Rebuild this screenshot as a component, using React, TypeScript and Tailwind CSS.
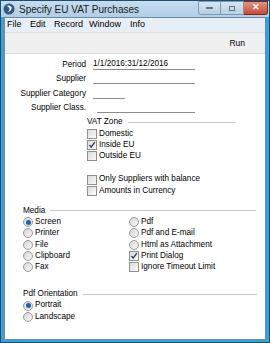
import React from "react";

const Check = ({ checked }: { checked?: boolean }) => (
  <span className="relative w-[10px] h-[10px] border border-[#8f8f8f] bg-gradient-to-br from-[#dcdcdc] to-[#fbfbfb] shrink-0">
    {checked && (
      <svg className="absolute left-0 top-0 w-[8px] h-[8px]" viewBox="0 0 8 8">
        <path d="M1.5 4 L3.2 6.2 L6.8 1.2" fill="none" stroke="#2a3f6b" strokeWidth="1.4" />
      </svg>
    )}
  </span>
);

const Radio = ({ checked }: { checked?: boolean }) => (
  <span className="flex items-center justify-center w-[10px] h-[10px] rounded-full border border-[#9a9a9a] bg-gradient-to-br from-[#d6d6d6] to-[#f8f8f8] shrink-0">
    {checked && <span className="w-[5px] h-[5px] rounded-full bg-[#1f5fa8]" />}
  </span>
);

const Opt = ({ kind, checked, label }: { kind: "c" | "r"; checked?: boolean; label: string }) => (
  <div className="flex items-center gap-[2px] h-[11.3px]">
    {kind === "c" ? <Check checked={checked} /> : <Radio checked={checked} />}
    <span>{label}</span>
  </div>
);

const Field = ({ label, value, w, ml = 0 }: { label: string; value?: string; w: number; ml?: number }) => (
  <div className="flex items-end h-[14.5px]">
    <span className="w-[81px] text-right leading-[11px]">{label}</span>
    <span
      className="border-b border-[#8c8c8c] leading-[10px] h-[12px] flex items-end"
      style={{ width: w, marginLeft: 7 + ml }}
    >
      {value}
    </span>
  </div>
);

const Legend = ({ label, lineW }: { label: string; lineW: number }) => (
  <div className="flex items-center h-[11px]">
    <span>{label}</span>
    <span className="ml-[5px] border-b border-[#c8c8c8]" style={{ width: lineW }} />
  </div>
);

export default function App() {
  return (
    <div className="w-[270px] h-[343px] bg-[#3d9fd6] border border-[#1d4e6e] flex flex-col font-['Liberation_Sans',Arial,sans-serif] text-[8.2px] text-black overflow-hidden">
      {/* title bar */}
      <div className="h-[16px] flex items-center bg-gradient-to-b from-[#c6dcef] to-[#b2cde6] pl-[2px] relative">
        <svg className="w-[12px] h-[12px]" viewBox="0 0 12 12">
          <circle cx="6" cy="6" r="5.5" fill="#2f5d86" />
          <path d="M3.5 3 Q7 1.5 8.8 4.8 Q8 8.5 4.5 9 Q7.4 7 6.2 4.8 Q5 3.2 3.5 3 Z" fill="#fff" />
        </svg>
        <span className="ml-[4px] text-[10px] text-[#1a1a1a]">Specify EU VAT Purchases</span>
        <div className="absolute right-[1px] top-0 flex">
          <div className="w-[23px] h-[14px] border border-[#7d98b4] rounded-bl-[3px] bg-gradient-to-b from-[#d8e5f1] to-[#b9cfe3] flex items-center justify-center">
            <span className="w-[7px] h-[2px] bg-[#5f7891]" />
          </div>
          <div className="w-[23px] h-[14px] border border-l-0 border-[#7d98b4] bg-gradient-to-b from-[#d8e5f1] to-[#b9cfe3] flex items-center justify-center">
            <span className="w-[6px] h-[5px] border border-[#5f7891]" />
          </div>
          <div className="w-[24px] h-[14px] border border-l-0 border-[#7a2c22] rounded-br-[3px] bg-gradient-to-b from-[#e2947f] to-[#c44a34] flex items-center justify-center text-white text-[9px] font-bold">
            ✕
          </div>
        </div>
      </div>
      {/* body with side frames */}
      <div className="flex-1 flex flex-col mx-[3px] mb-[2px] border border-[#6e8aa2] bg-white">
        <div className="h-[15px] flex items-center bg-[#e8eef5] border-b border-[#d8dfe8] text-[9px] pl-[2px]">
          <span className="w-[23px]">File</span>
          <span className="w-[24px]">Edit</span>
          <span className="w-[35px]">Record</span>
          <span className="w-[41px]">Window</span>
          <span>Info</span>
        </div>
        <div className="h-[21px] flex items-center justify-end pr-[20px] bg-[#f0f0f0] border-b border-[#dadada] text-[8.5px]">
          Run
        </div>
        <div className="flex flex-col pt-[1px]">
          <Field label="Period" value="1/1/2016:31/12/2016" w={102} />
          <Field label="Supplier" w={102} />
          <Field label="Supplier Category" w={32} />
          <Field label="Supplier Class." w={98} ml={4} />
          <div className="ml-[82px] mt-[4px]">
            <Legend label="VAT Zone" lineW={108} />
            <Opt kind="c" label="Domestic" />
            <Opt kind="c" checked label="Inside EU" />
            <Opt kind="c" label="Outside EU" />
            <div className="h-[12px]" />
            <Opt kind="c" label="Only Suppliers with balance" />
            <Opt kind="c" label="Amounts in Currency" />
          </div>
          <div className="ml-[18px] mt-[9px]">
            <Legend label="Media" lineW={206} />
            <div className="flex">
              <div className="w-[106px]">
                <Opt kind="r" checked label="Screen" />
                <Opt kind="r" label="Printer" />
                <Opt kind="r" label="File" />
                <Opt kind="r" label="Clipboard" />
                <Opt kind="r" label="Fax" />
              </div>
              <div>
                <Opt kind="r" label="Pdf" />
                <Opt kind="r" label="Pdf and E-mail" />
                <Opt kind="r" label="Html as Attachment" />
                <Opt kind="c" checked label="Print Dialog" />
                <Opt kind="c" label="Ignore Timeout Limit" />
              </div>
            </div>
          </div>
          <div className="ml-[18px] mt-[16px]">
            <Legend label="Pdf Orientation" lineW={174} />
            <Opt kind="r" checked label="Portrait" />
            <Opt kind="r" label="Landscape" />
          </div>
        </div>
      </div>
    </div>
  );
}
